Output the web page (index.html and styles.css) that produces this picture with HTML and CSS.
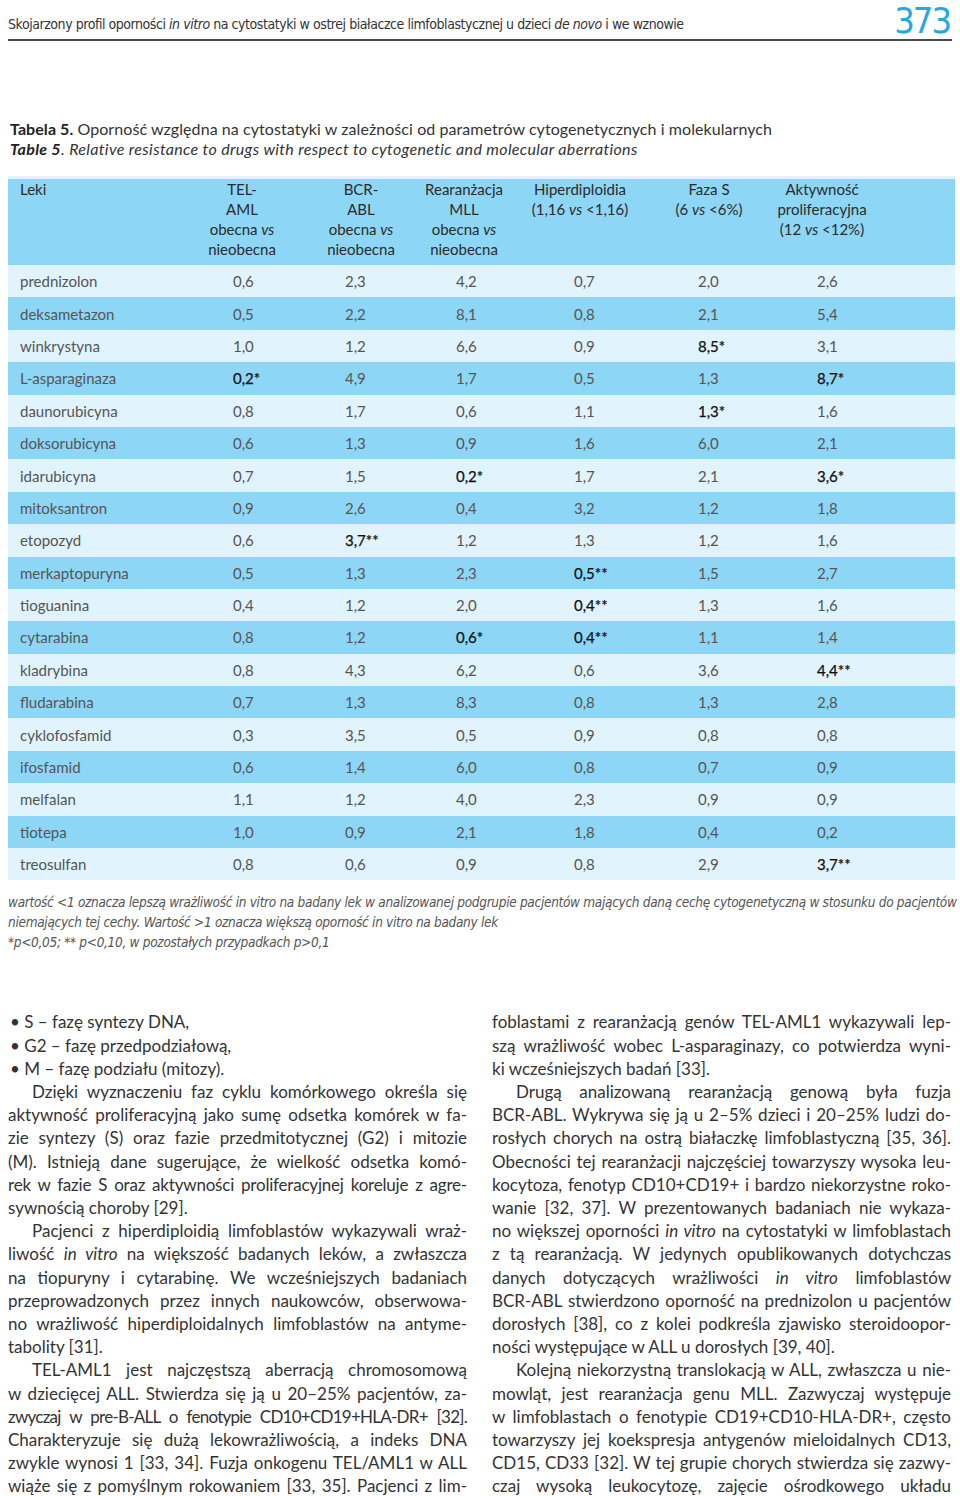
FILE: index.html
```html
<!DOCTYPE html>
<html lang="pl">
<head>
<meta charset="utf-8">
<title>Tabela 5</title>
<link rel="stylesheet" href="styles.css">
</head>
<body>
<div class="page">
  <header class="running">
    <span class="running-title">Skojarzony profil oporności <i>in vitro</i> na cytostatyki w ostrej białaczce limfoblastycznej u dzieci <i>de novo</i> i we wznowie</span>
    <span class="folio">373</span>
  </header>

  <div class="caption">
    <div><b>Tabela 5.</b> Oporność względna na cytostatyki w zależności od parametrów cytogenetycznych i molekularnych</div>
    <div class="caption-en"><b>Table 5</b>. Relative resistance to drugs with respect to cytogenetic and molecular aberrations</div>
  </div>

  <table class="data">
    <colgroup>
      <col class="c-drug"><col class="c-tel"><col class="c-bcr"><col class="c-mll"><col class="c-hip"><col class="c-fs"><col class="c-akt"><col class="c-pad">
    </colgroup>
    <thead>
      <tr>
        <th class="drug">Leki</th>
        <th>TEL-<br>AML<br>obecna <i>vs</i><br>nieobecna</th>
        <th>BCR-<br>ABL<br>obecna <i>vs</i><br>nieobecna</th>
        <th>Rearanżacja<br>MLL<br>obecna <i>vs</i><br>nieobecna</th>
        <th>Hiperdiploidia<br>(1,16 <i>vs</i> &lt;1,16)</th>
        <th>Faza S<br>(6 <i>vs</i> &lt;6%)</th>
        <th>Aktywność<br>proliferacyjna<br>(12 <i>vs</i> &lt;12%)</th>
        <th></th>
      </tr>
    </thead>
    <tbody>
      <tr><td>prednizolon</td><td>0,6</td><td>2,3</td><td>4,2</td><td>0,7</td><td>2,0</td><td>2,6</td><td></td></tr>
      <tr><td>deksametazon</td><td>0,5</td><td>2,2</td><td>8,1</td><td>0,8</td><td>2,1</td><td>5,4</td><td></td></tr>
      <tr><td>winkrystyna</td><td>1,0</td><td>1,2</td><td>6,6</td><td>0,9</td><td class="sig">8,5*</td><td>3,1</td><td></td></tr>
      <tr><td>L-asparaginaza</td><td class="sig">0,2*</td><td>4,9</td><td>1,7</td><td>0,5</td><td>1,3</td><td class="sig">8,7*</td><td></td></tr>
      <tr><td>daunorubicyna</td><td>0,8</td><td>1,7</td><td>0,6</td><td>1,1</td><td class="sig">1,3*</td><td>1,6</td><td></td></tr>
      <tr><td>doksorubicyna</td><td>0,6</td><td>1,3</td><td>0,9</td><td>1,6</td><td>6,0</td><td>2,1</td><td></td></tr>
      <tr><td>idarubicyna</td><td>0,7</td><td>1,5</td><td class="sig">0,2*</td><td>1,7</td><td>2,1</td><td class="sig">3,6*</td><td></td></tr>
      <tr><td>mitoksantron</td><td>0,9</td><td>2,6</td><td>0,4</td><td>3,2</td><td>1,2</td><td>1,8</td><td></td></tr>
      <tr><td>etopozyd</td><td>0,6</td><td class="sig">3,7**</td><td>1,2</td><td>1,3</td><td>1,2</td><td>1,6</td><td></td></tr>
      <tr><td>merkaptopuryna</td><td>0,5</td><td>1,3</td><td>2,3</td><td class="sig">0,5**</td><td>1,5</td><td>2,7</td><td></td></tr>
      <tr><td>tioguanina</td><td>0,4</td><td>1,2</td><td>2,0</td><td class="sig">0,4**</td><td>1,3</td><td>1,6</td><td></td></tr>
      <tr><td>cytarabina</td><td>0,8</td><td>1,2</td><td class="sig">0,6*</td><td class="sig">0,4**</td><td>1,1</td><td>1,4</td><td></td></tr>
      <tr><td>kladrybina</td><td>0,8</td><td>4,3</td><td>6,2</td><td>0,6</td><td>3,6</td><td class="sig">4,4**</td><td></td></tr>
      <tr><td>fludarabina</td><td>0,7</td><td>1,3</td><td>8,3</td><td>0,8</td><td>1,3</td><td>2,8</td><td></td></tr>
      <tr><td>cyklofosfamid</td><td>0,3</td><td>3,5</td><td>0,5</td><td>0,9</td><td>0,8</td><td>0,8</td><td></td></tr>
      <tr><td>ifosfamid</td><td>0,6</td><td>1,4</td><td>6,0</td><td>0,8</td><td>0,7</td><td>0,9</td><td></td></tr>
      <tr><td>melfalan</td><td>1,1</td><td>1,2</td><td>4,0</td><td>2,3</td><td>0,9</td><td>0,9</td><td></td></tr>
      <tr><td>tiotepa</td><td>1,0</td><td>0,9</td><td>2,1</td><td>1,8</td><td>0,4</td><td>0,2</td><td></td></tr>
      <tr><td>treosulfan</td><td>0,8</td><td>0,6</td><td>0,9</td><td>0,8</td><td>2,9</td><td class="sig">3,7**</td><td></td></tr>
    </tbody>
  </table>

  <div class="notes">
    <div>wartość &lt;1 oznacza lepszą wrażliwość in vitro na badany lek w analizowanej podgrupie pacjentów mających daną cechę cytogenetyczną w stosunku do pacjentów</div>
    <div>niemających tej cechy. Wartość &gt;1 oznacza większą oporność in vitro na badany lek</div>
    <div>*p&lt;0,05; ** p&lt;0,10, w pozostałych przypadkach p&gt;0,1</div>
  </div>

  <div class="article">
    <div class="col">
      <span class="ln bullet">• S – fazę syntezy DNA,</span>
      <span class="ln bullet">• G2 – fazę przedpodziałową,</span>
      <span class="ln bullet">• M – fazę podziału (mitozy).</span>
      <span class="ln ind">Dzięki wyznaczeniu faz cyklu komórkowego określa się</span>
      <span class="ln">aktywność proliferacyjną jako sumę odsetka komórek w fa-</span>
      <span class="ln">zie syntezy (S) oraz fazie przedmitotycznej (G2) i mitozie</span>
      <span class="ln">(M). Istnieją dane sugerujące, że wielkość odsetka komó-</span>
      <span class="ln tight">rek w fazie S oraz aktywności proliferacyjnej koreluje z agre-</span>
      <span class="ln end">sywnością choroby [29].</span>
      <span class="ln ind">Pacjenci z hiperdiploidią limfoblastów wykazywali wraż-</span>
      <span class="ln">liwość <i>in vitro</i> na większość badanych leków, a zwłaszcza</span>
      <span class="ln">na tiopuryny i cytarabinę. We wcześniejszych badaniach</span>
      <span class="ln">przeprowadzonych przez innych naukowców, obserwowa-</span>
      <span class="ln">no wrażliwość hiperdiploidalnych limfoblastów na antyme-</span>
      <span class="ln end">tabolity [31].</span>
      <span class="ln ind">TEL-AML1 jest najczęstszą aberracją chromosomową</span>
      <span class="ln">w dziecięcej ALL. Stwierdza się ją u 20–25% pacjentów, za-</span>
      <span class="ln tighter">zwyczaj w pre-B-ALL o fenotypie CD10+CD19+HLA-DR+ [32].</span>
      <span class="ln">Charakteryzuje się dużą lekowrażliwością, a indeks DNA</span>
      <span class="ln">zwykle wynosi 1 [33, 34]. Fuzja onkogenu TEL/AML1 w ALL</span>
      <span class="ln">wiąże się z pomyślnym rokowaniem [33, 35]. Pacjenci z lim-</span>
    </div>
    <div class="col">
      <span class="ln">foblastami z rearanżacją genów TEL-AML1 wykazywali lep-</span>
      <span class="ln">szą wrażliwość wobec L-asparaginazy, co potwierdza wyni-</span>
      <span class="ln end">ki wcześniejszych badań [33].</span>
      <span class="ln ind">Drugą analizowaną rearanżacją genową była fuzja</span>
      <span class="ln">BCR-ABL. Wykrywa się ją u 2–5% dzieci i 20–25% ludzi do-</span>
      <span class="ln">rosłych chorych na ostrą białaczkę limfoblastyczną [35, 36].</span>
      <span class="ln">Obecności tej rearanżacji najczęściej towarzyszy wysoka leu-</span>
      <span class="ln">kocytoza, fenotyp CD10+CD19+ i bardzo niekorzystne roko-</span>
      <span class="ln">wanie [32, 37]. W prezentowanych badaniach nie wykaza-</span>
      <span class="ln">no większej oporności <i>in vitro</i> na cytostatyki w limfoblastach</span>
      <span class="ln">z tą rearanżacją. W jedynych opublikowanych dotychczas</span>
      <span class="ln">danych dotyczących wrażliwości <i>in vitro</i> limfoblastów</span>
      <span class="ln">BCR-ABL stwierdzono oporność na prednizolon u pacjentów</span>
      <span class="ln">dorosłych [38], co z kolei podkreśla zjawisko steroidoopor-</span>
      <span class="ln end">ności występujące w ALL u dorosłych [39, 40].</span>
      <span class="ln ind">Kolejną niekorzystną translokacją w ALL, zwłaszcza u nie-</span>
      <span class="ln">mowląt, jest rearanżacja genu MLL. Zazwyczaj występuje</span>
      <span class="ln">w limfoblastach o fenotypie CD19+CD10-HLA-DR+, często</span>
      <span class="ln">towarzyszy jej koekspresja antygenów mieloidalnych CD13,</span>
      <span class="ln">CD15, CD33 [32]. W tej grupie chorych stwierdza się zazwy-</span>
      <span class="ln">czaj wysoką leukocytozę, zajęcie ośrodkowego układu</span>
    </div>
  </div>
</div>
</body>
</html>
```

FILE: styles.css
```css
html, body {
  margin: 0;
  padding: 0;
  background: #ffffff;
}

.page {
  width: 944px;
  padding: 0 8px;
  font-family: Lato, "Noto Sans", sans-serif;
  color: #333333;
}

/* running head */
.running {
  display: flex;
  justify-content: space-between;
  align-items: flex-end;
  height: 39px;
  border-bottom: 2px solid #4a4a4a;
}
.running-title {
  font-family: "DejaVu Sans Condensed", "DejaVu Sans", sans-serif;
  font-stretch: condensed;
  font-size: 14px;
  letter-spacing: -0.45px;
  line-height: 20px;
  color: #333333;
  padding-bottom: 5px;
}
.folio {
  font-family: "DejaVu Sans Condensed", "DejaVu Sans", sans-serif;
  font-stretch: condensed;
  font-size: 36px;
  letter-spacing: -2px;
  line-height: 36px;
  color: #25a7e0;
  padding-right: 2px;
}

/* caption */
.caption {
  margin-top: 78px;
  padding-left: 2px;
  font-size: 16px;
  letter-spacing: 0.07px;
  line-height: 20px;
  color: #333333;
}
.caption b {
  font-weight: 700;
  color: #222222;
}
.caption-en {
  font-style: italic;
  letter-spacing: 0.35px;
}

/* table */
.data {
  margin-top: 20px;
  width: 947px;
  border-collapse: collapse;
  table-layout: fixed;
  font-size: 15px;
  box-shadow: 0 -3px 0 #e2f3fb;
}
.c-drug { width: 172px; }
.c-tel { width: 124px; }
.c-bcr { width: 114px; }
.c-mll { width: 92px; }
.c-hip { width: 140px; }
.c-fs { width: 118px; }
.c-akt { width: 108px; }
.c-pad { width: 79px; }

.data thead th {
  background: #8dd6f5;
  font-weight: 400;
  color: #2b2b2b;
  text-align: center;
  vertical-align: top;
  line-height: 20px;
  padding: 0 0 6px 0;
  white-space: nowrap;
}
.data thead th.drug {
  text-align: left;
  padding-left: 12px;
}
.data tbody td {
  height: 32.4px;
  padding: 0;
  line-height: 20px;
  color: #555555;
  vertical-align: middle;
  white-space: nowrap;
}
.data tbody tr:nth-child(odd) td { background: #e1f3fc; }
.data tbody tr:nth-child(even) td { background: #8dd6f5; }

.data tbody td:nth-child(1) { padding-left: 12px; }
.data tbody td:nth-child(2) { padding-left: 53px; }
.data tbody td:nth-child(3) { padding-left: 41px; }
.data tbody td:nth-child(4) { padding-left: 38px; }
.data tbody td:nth-child(5) { padding-left: 64px; }
.data tbody td:nth-child(6) { padding-left: 48px; }
.data tbody td:nth-child(7) { padding-left: 49px; }

.data tbody td.sig {
  color: #111111;
  -webkit-text-stroke: 0.25px #111111;
}

/* notes */
.notes {
  margin-top: 12px;
  font-family: "DejaVu Sans Condensed", "DejaVu Sans", sans-serif;
  font-stretch: condensed;
  font-style: italic;
  font-size: 13.5px;
  letter-spacing: -0.3px;
  line-height: 20px;
  color: #555555;
  white-space: nowrap;
}

/* article body */
.article {
  margin-top: 58px;
  display: grid;
  grid-template-columns: 459px 459px;
  column-gap: 25px;
  font-size: 17px;
  line-height: 23.2px;
  color: #333333;
}
.ln {
  display: block;
  text-align: justify;
  text-align-last: justify;
}
.ln.end,
.ln.bullet {
  text-align-last: left;
}
.ln.bullet {
  padding-left: 2px;
}
.ln.ind {
  text-indent: 24px;
}
.ln.tight {
  letter-spacing: -0.2px;
}
.ln.tighter {
  letter-spacing: -0.75px;
}
```
